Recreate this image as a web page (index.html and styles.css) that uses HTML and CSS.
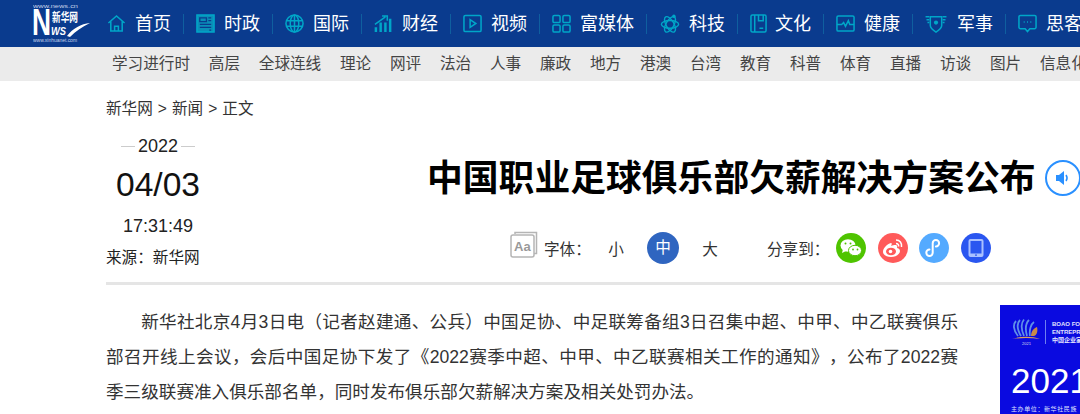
FILE: index.html
```html
<!DOCTYPE html>
<html>
<head>
  <meta charset="UTF-8">
  <title>中国职业足球俱乐部欠薪解决方案公布</title>
  <link rel="stylesheet" href="styles.css">
</head>
<body>
<div class="topbar">
  <svg class="logo" viewBox="0 0 58 42" width="58" height="42">
    <text x="0" y="5.500" class="logo-small" textLength="45" lengthAdjust="spacingAndGlyphs">www.news.cn</text>
    <text x="-1" y="33" class="logo-n" textLength="19" lengthAdjust="spacingAndGlyphs">N</text>
    <text x="19" y="20" class="logo-cn" textLength="26" lengthAdjust="spacingAndGlyphs">新华网</text>
    <text x="18" y="33" class="logo-ws" textLength="15" lengthAdjust="spacingAndGlyphs">WS</text>
    <path d="M34 34 C40 26 48 22 57 21 C49 25 43 29 37 35 Z" fill="#fff"/>
    <text x="0" y="40" class="logo-small" textLength="44" lengthAdjust="spacingAndGlyphs">www.xinhuanet.com</text>
  </svg>
  <div class="mainnav">
    <a class="navitem">
      <svg class="ico" viewBox="0 0 20 20"><path d="M1.500 9.500 10 2l8.500 7.500M4 8v10h12V8M8 18v-5h4v5"/></svg>
      <span>首页</span>
    </a>
    <a class="navitem">
      <svg class="ico" viewBox="0 0 20 20"><path class="solid" d="M1 1h18v18H1z"/><path class="cut" d="M4 4h7v4H4zM13 4h3M13 7h3M4 11h12M4 14h12M14 17h2"/></svg>
      <span>时政</span>
    </a>
    <a class="navitem">
      <svg class="ico" viewBox="0 0 20 20"><circle cx="10" cy="10" r="9"/><ellipse cx="10" cy="10" rx="4.500" ry="9"/><path d="M1.500 7h17M1.500 13h17M10 1v18"/></svg>
      <span>国际</span>
    </a>
    <a class="navitem">
      <svg class="ico" viewBox="0 0 20 20"><path d="M1 11 12 3M8.500 2H14v5"/><path class="bars" d="M2 19v-5M7 19V9M12 19V9M17 19V5"/></svg>
      <span>财经</span>
    </a>
    <a class="navitem">
      <svg class="ico" viewBox="0 0 20 20"><rect x="1" y="1.500" width="18" height="17" rx="1.500"/><path d="M7.500 6v8l6-4z"/></svg>
      <span>视频</span>
    </a>
    <a class="navitem">
      <svg class="ico" viewBox="0 0 20 20"><rect x="1" y="1.500" width="7.500" height="7.500" rx="1.500"/><rect x="11.500" y="1.500" width="7.500" height="7.500" rx="1.500"/><rect x="1" y="11.500" width="7.500" height="7.500" rx="1.500"/><rect x="11.500" y="11.500" width="7.500" height="7.500" rx="1.500"/></svg>
      <span>富媒体</span>
    </a>
    <a class="navitem wide">
      <svg class="ico" viewBox="0 0 22 22"><ellipse cx="11" cy="12" rx="10" ry="4.500"/><ellipse cx="11" cy="12" rx="10" ry="4.500" transform="rotate(60 11 12)"/><ellipse cx="11" cy="12" rx="10" ry="4.500" transform="rotate(120 11 12)"/><circle class="dot" cx="15.500" cy="2.500" r="2"/></svg>
      <span>科技</span>
    </a>
    <a class="navitem narrow">
      <svg class="ico" viewBox="0 0 18 20"><rect x="1" y="1" width="16" height="18" rx="1.500"/><path d="M5 1v18M9 1v6h5V1M10 15h4"/></svg>
      <span>文化</span>
    </a>
    <a class="navitem">
      <svg class="ico" viewBox="0 0 20 20"><rect x="1" y="2" width="18" height="16" rx="1.500"/><path d="M1 11h5l2-2 2 4 3-6 1.500 4H19"/></svg>
      <span>健康</span>
    </a>
    <a class="navitem wide mil">
      <svg class="ico" viewBox="0 0 22 20"><path d="M5 3h12v9c0 3-3 5-6 7-3-2-6-4-6-7z"/><path d="M0 3h4M1 6h3M2 9h2M18 3h4M18 6h3M18 9h2"/><circle class="dot" cx="11" cy="9" r="2.200"/></svg>
      <span>军事</span>
    </a>
    <a class="navitem last">
      <svg class="ico" viewBox="0 0 20 20"><path d="M2.500 1.500h15a1.500 1.500 0 0 1 1.500 1.500v11a1.500 1.500 0 0 1-1.500 1.500h-5l-2.500 3-2.500-3h-5a1.500 1.500 0 0 1-1.500-1.500V3a1.500 1.500 0 0 1 1.500-1.500z"/><path d="M6 8.500h1M9.500 8.500h1M13 8.500h1"/></svg>
      <span>思客</span>
    </a>
  </div>
</div>

<div class="subnav">
  <a>学习进行时</a><a>高层</a><a>全球连线</a><a>理论</a><a>网评</a><a>法治</a><a>人事</a><a>廉政</a><a>地方</a><a>港澳</a><a>台湾</a><a>教育</a><a>科普</a><a>体育</a><a>直播</a><a>访谈</a><a>图片</a><a>信息化</a>
</div>

<div class="main">
  <div class="crumb">新华网 &gt; 新闻 &gt; 正文</div>
  <div class="head">
    <div class="info">
      <div class="year"><span>2022</span></div>
      <div class="day">04/03</div>
      <div class="time">17:31:49</div>
      <div class="source">来源：新华网</div>
    </div>
    <div class="head-right">
      <div class="title-row">
        <h1>中国职业足球俱乐部欠薪解决方案公布</h1>
        <span class="voice">
          <svg viewBox="0 0 16 16" width="16" height="16"><path d="M1 5h3l5-4v14l-5-4H1z" fill="#2a90ff"/><path d="M11 5c1.300 1.800 1.300 4.200 0 6" fill="none" stroke="#2a90ff" stroke-width="1.500"/></svg>
        </span>
      </div>
      <div class="tools">
        <svg class="aa" viewBox="0 0 28 27" width="28" height="27">
          <path d="M5 3V1.500h21.500v21H24" fill="none" stroke="#b5b5b5" stroke-width="1.500"/>
          <rect x="1" y="4" width="23" height="22" rx="2" fill="#fff" stroke="#b5b5b5" stroke-width="1.500"/>
          <text x="4" y="20" class="aa-text">Aa</text>
        </svg>
        <span class="tool-label">字体：</span>
        <span class="size">小</span>
        <span class="size on">中</span>
        <span class="size">大</span>
        <span class="share-label">分享到：</span>
        <span class="share wx">
          <svg viewBox="0 0 30 30" width="30" height="30"><ellipse cx="12" cy="12.500" rx="7.500" ry="6.200" fill="#fff"/><path d="M7 16l-1 4 4-2z" fill="#fff"/><ellipse cx="19" cy="17.500" rx="6.500" ry="5.200" fill="#fff" stroke="#4fc400" stroke-width="1"/><circle cx="9.500" cy="10.500" r="1" fill="#4fc400"/><circle cx="14.500" cy="10.500" r="1" fill="#4fc400"/><circle cx="17" cy="16.500" r=".9" fill="#4fc400"/><circle cx="21.500" cy="16.500" r=".9" fill="#4fc400"/></svg>
        </span>
        <span class="share wb">
          <svg viewBox="0 0 30 30" width="30" height="30"><path d="M13 10c-4 1-8 5-8 9 0 3 4 5 8 5 5 0 9-3 9-6 0-2-2-3-3-3 1-3-1-4-6-2 1-2 1-3 0-3z" fill="#fff"/><ellipse cx="13" cy="18.500" rx="5" ry="3.800" fill="#ff5a5a"/><circle cx="12.500" cy="18.500" r="1.800" fill="#fff"/><path d="M18 7c4 0 6 3 5.500 7M18 10.500c2 0 3 1.500 2.500 3" fill="none" stroke="#fff" stroke-width="1.500"/></svg>
        </span>
        <span class="share mp">
          <svg viewBox="0 0 30 30" width="30" height="30"><path d="M10.500 16.500a3.200 3.200 0 1 0 3.200 3.200v-9.400a3.200 3.200 0 1 1 3.200 3.200" fill="none" stroke="#fff" stroke-width="2" stroke-linecap="round"/></svg>
        </span>
        <span class="share app">
          <svg viewBox="0 0 30 30" width="30" height="30"><rect x="7.500" y="6" width="15" height="18" rx="2" fill="#a9c0ff"/><rect x="9.500" y="8" width="11" height="12.500" fill="#2a56f0"/><rect x="14" y="21.500" width="2" height="1.200" fill="#2a56f0"/></svg>
        </span>
      </div>
    </div>
  </div>

  <div class="article">
    <div class="text">
      <p>新华社北京4月3日电（记者赵建通、公兵）中国足协、中足联筹备组3日召集中超、中甲、中乙联赛俱乐部召开线上会议，会后中国足协下发了《2022赛季中超、中甲、中乙联赛相关工作的通知》，公布了2022赛季三级联赛准入俱乐部名单，同时发布俱乐部欠薪解决方案及相关处罚办法。</p>
    </div>
    <div class="ad">
      <div class="ad-top">
        <svg viewBox="0 0 30 28" width="30" height="28">
          <path d="M7 18C2 12 2 6 5 3M10 18C6 11 6 5 9 2M13 18C10 11 10 5 13 1.500M16 18C14 11 15 5 18 2M19 18C18 12 20 6 23 4" fill="none" stroke="#5f8fe8" stroke-width="1.800"/>
          <path d="M20 18c0-5 3-8 6-9 1 4 0 8-3 9z" fill="#c98a4a"/>
          <path d="M1 21c8-3 20-3 28 0-9-1.500-19-1.500-28 0z" fill="#d9a060"/>
          <text x="11" y="27" class="ad-year">2021</text>
        </svg>
        <div class="ad-name">BOAO FORUM<br>ENTREPRENEURS<br>中国企业家</div>
      </div>
      <div class="ad-big">2021</div>
      <div class="ad-host">主办单位：新华社民族</div>
    </div>
  </div>
</div>
</body>
</html>
```

FILE: styles.css
```css
html, body {
  margin: 0;
  padding: 0;
  height: 414px;
  overflow: hidden;
  background: #fff;
}

body {
  font-family: "Liberation Sans", "Noto Sans CJK SC", sans-serif;
  color: #333;
  text-spacing-trim: space-all;
}

/* top blue bar */
.topbar {
  display: flex;
  align-items: center;
  height: 47px;
  padding-left: 33px;
  background: #0a3b8e;
  overflow: hidden;
}

.logo {
  flex: none;
  margin-top: -2px;
}

.logo text {
  fill: #fff;
  font-family: "Liberation Sans", "Noto Sans CJK SC", sans-serif;
}

.logo .logo-small {
  font-size: 5px;
  fill: #c5d3ea;
}

.logo .logo-n {
  font-size: 36px;
  font-weight: bold;
}

.logo .logo-cn {
  font-size: 12px;
  font-weight: bold;
}

.logo .logo-ws {
  font-size: 10px;
  font-weight: bold;
  font-style: italic;
}

.mainnav {
  display: flex;
  flex: none;
  margin-left: 4px;
}

.navitem {
  display: flex;
  align-items: center;
  gap: 9px;
  height: 20px;
  padding: 0 12px;
  border-right: 1px solid #0f5f9f;
  color: #fff;
  font-size: 18px;
  line-height: 20px;
  white-space: nowrap;
}

.navitem.last {
  border-right: 0;
}

.navitem.wide,
.navitem.narrow {
  gap: 8px;
}

.navitem.mil {
  gap: 10px;
}

.ico {
  flex: none;
  width: 19px;
  height: 19px;
  fill: none;
  stroke: #00a6c8;
  stroke-width: 1.600;
}

.navitem.wide .ico {
  width: 22px;
}

.navitem.narrow .ico {
  width: 17px;
}

.ico .solid {
  fill: #0a8fb8;
  stroke: #00a6c8;
}

.ico .cut {
  stroke: #0a3b8e;
  stroke-width: 1.400;
}

.ico .bars {
  stroke-width: 2.600;
}

.ico .dot {
  fill: #00a6c8;
  stroke: none;
}

/* grey channel bar */
.subnav {
  display: flex;
  gap: 18.800px;
  height: 34px;
  padding-left: 112px;
  background: #ebebeb;
  font-size: 15.600px;
  line-height: 34px;
  color: #444;
  white-space: nowrap;
  overflow: hidden;
}

.main {
  width: 1300px;
  padding-left: 106px;
}

.crumb {
  padding-top: 15px;
  font-size: 15.600px;
  line-height: 26px;
  word-spacing: .7px;
}

.head {
  display: flex;
  width: 974px;
  height: 148px;
  margin-top: 12px;
  border-bottom: 3px solid #e5e5e5;
}

.info {
  flex: none;
  width: 104px;
  color: #222;
}

.year {
  display: flex;
  align-items: center;
  justify-content: center;
  font-size: 18px;
  line-height: 24px;
}

.year span {
  margin: 0 3px;
}

.year::before, .year::after {
  content: "";
  width: 14px;
  height: 1px;
  background: #ccc;
}

.day {
  margin-top: 6px;
  font-size: 33.600px;
  line-height: 42px;
  text-align: center;
  color: #111;
}

.time {
  margin-top: 8px;
  font-size: 18px;
  line-height: 24px;
  text-align: center;
}

.source {
  margin-top: 8px;
  font-size: 15.600px;
  line-height: 24px;
  white-space: nowrap;
}

.head-right {
  flex: none;
  padding-left: 217px;
}

.title-row {
  display: flex;
  align-items: center;
  height: 44px;
  margin-top: 23px;
}

h1 {
  margin: 0;
  font-size: 35.800px;
  line-height: 44px;
  font-weight: bold;
  color: #000;
  white-space: nowrap;
}

.voice {
  display: flex;
  flex: none;
  align-items: center;
  justify-content: center;
  width: 32px;
  height: 32px;
  margin-left: 9px;
  border: 2px solid #2a90ff;
  border-radius: 50%;
  margin-top: -2px;
}

.tools {
  display: flex;
  align-items: center;
  height: 32px;
  margin-top: 31px;
  margin-left: 83px;
  font-size: 15.600px;
}

.aa {
  flex: none;
  margin-bottom: 7px;
}

.aa-text {
  font-size: 13px;
  font-weight: bold;
  fill: #999;
  font-family: "Liberation Sans", sans-serif;
}

.tool-label {
  margin-left: 6px;
  width: 63px;
  white-space: nowrap;
}

.size {
  width: 18px;
  text-align: center;
}

.size.on {
  width: 32px;
  height: 32px;
  margin: 0 22px;
  border-radius: 50%;
  background: #2f65c0;
  color: #fff;
  line-height: 32px;
}

.share-label {
  width: 69px;
  margin-left: 48px;
  white-space: nowrap;
}

.share {
  display: block;
  flex: none;
  width: 30px;
  height: 30px;
  margin-right: 11.700px;
  border-radius: 50%;
}

.share svg {
  display: block;
}

.share.wx { background: #4fc400; }
.share.wb { background: #ff5a5a; }
.share.mp { background: #54aaff; }
.share.app { background: #2a56f0; }

/* article */
.article {
  display: flex;
  margin-top: 20px;
}

.text {
  flex: none;
  width: 852px;
}

.text p {
  margin: 0;
  font-size: 17.600px;
  line-height: 35px;
  text-indent: 2em;
  text-align: justify;
  color: #333;
}

.ad {
  flex: none;
  width: 300px;
  height: 200px;
  margin-left: 42px;
  padding: 13px 0 0 11px;
  box-sizing: border-box;
  background: #0a0ae0;
  color: #fff;
}

.ad-top {
  display: flex;
  align-items: center;
  gap: 4px;
}

.ad-year {
  font-size: 4px;
  fill: #dde;
  font-family: "Liberation Sans", sans-serif;
}

.ad-name {
  padding-left: 6px;
  border-left: 1px solid #6f7ff0;
  font-size: 6px;
  line-height: 8px;
  font-weight: bold;
  color: #e4e4ff;
  white-space: nowrap;
}

.ad-big {
  margin-top: 16px;
  font-size: 35px;
  line-height: 38px;
}

.ad-host {
  margin-top: 5px;
  font-size: 6px;
  line-height: 8px;
  letter-spacing: .6px;
  color: #dfe0ff;
  white-space: nowrap;
}
```
